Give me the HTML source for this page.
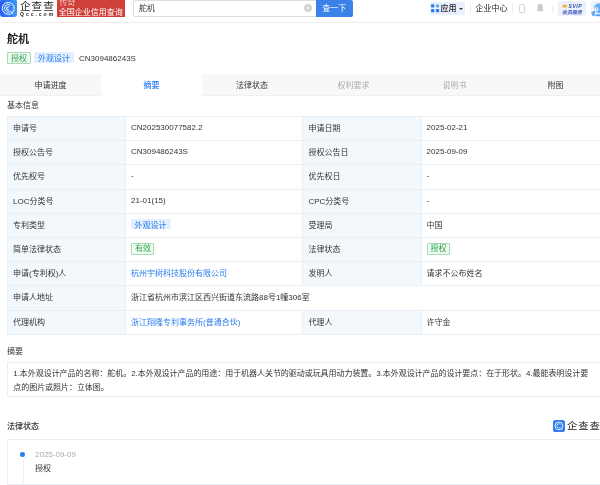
<!DOCTYPE html>
<html><head><meta charset="utf-8">
<style>
*{box-sizing:border-box;margin:0;padding:0}
html,body{width:600px;height:485px;overflow:hidden;background:#fff}
body{will-change:transform;font-family:"Liberation Sans","Noto Sans CJK SC",sans-serif;color:#333;position:relative;font-size:8px}
.abs{position:absolute;white-space:nowrap}
.hdr{position:absolute;left:0;top:0;width:600px;height:23px;background:#fff;border-bottom:1px solid #eee}
.logo{position:absolute;left:0;top:-0.7px;width:16.9px;height:17.4px;background:linear-gradient(90deg,#2a60f2,#3d98f5);border-radius:3px}
.red{position:absolute;left:57.2px;top:0;width:68px;height:16.9px;background:#d0403a;color:#fff;font-size:8px;line-height:8.5px;padding-left:1.6px;overflow:hidden}
.search{position:absolute;left:132.8px;top:-0.3px;width:184px;height:17px;border:1px solid #ddd;border-radius:2px 0 0 2px;background:#fff}
.btn{position:absolute;left:316px;top:0;width:36.5px;height:16.7px;background:#3a82e8;color:#fff;font-size:8px;line-height:17.5px;text-align:center;border-radius:0 2px 2px 0}
.tabs{position:absolute;left:0;top:74.4px;width:600px;height:21.2px;background:#f8f8f8;border-bottom:1px solid #f0f0f0}
.tab{position:absolute;top:74.4px;height:21.2px;line-height:23.2px;font-size:8px;text-align:center;width:101px;color:#333}
.tab.act{background:#fff;color:#2b7cf0;font-weight:500}
.tab.dis{color:#aaa}
.sec{position:absolute;left:7px;font-size:8px;color:#333}
table{position:absolute;left:7px;top:116px;width:620px;height:218px;table-layout:fixed;border-collapse:collapse;font-size:8px}
td{border:1px solid #e8eff6;height:24.2px;padding:0 0 2px 5px;vertical-align:middle;color:#333}
td.l{background:#f3f8fd}
td.v{padding-left:5px}
td.v:nth-child(4){padding-left:4.2px}
a{color:#2b7cf0;text-decoration:none}
.tag{display:inline-block;font-size:8px;line-height:10px;padding:0 3px;border-radius:1px}
.tg{color:#2aa54a;border:1px solid #a8dbb5;background:#f1faf3}
.tb{color:#2b7cf0;background:#e3effd;border:1px solid #e3effd}
td .tag{position:relative;top:0.8px;padding:0 2.2px 0 3px}
td .tb{border:0;line-height:7.3px;padding:3px 4px 0 4px;top:0.1px;left:-0.4px}
.box{position:absolute;left:7px;border:1px solid #e9eef4;background:#fff}
</style></head><body>
<div class="hdr">
 <div class="logo"></div>
 <svg class="abs" style="left:0;top:0" width="17" height="17" viewBox="0 0 17 17"><circle cx="8.25" cy="8.4" r="5.9" fill="none" stroke="#fff" stroke-width="0.95"/><path d="M10.43 11.51 A3.8 3.8 0 1 1 10.43 5.29" fill="none" stroke="#fff" stroke-width="0.9"/><path d="M8.85 9.70 A1.5 1.5 0 1 1 8.85 7.10" fill="none" stroke="#fff" stroke-width="1.1"/><path d="M11 11.6 L13.1 13.5" stroke="#fff" stroke-width="1" stroke-linecap="round"/></svg>
 <div class="abs" style="left:20px;top:0px;font-size:10.6px;font-weight:400;color:#222;letter-spacing:1px;line-height:13px">企查查</div>
 <div class="abs" style="left:20px;top:10.6px;font-size:5px;font-weight:bold;color:#222;letter-spacing:2px;line-height:6px">Qcc.com</div>
 <div class="red"><div style="margin-top:-1.4px;color:#f6c4c0;padding-left:0.8px">传奇</div><div style="margin-top:1.7px">全国企业信用查询</div></div>
 <div class="search"></div>
 <div class="abs" style="left:139px;top:4.3px;font-size:8px;line-height:10px;color:#333">舵机</div>
 <div class="abs" style="left:303.5px;top:4.2px;width:8px;height:8px;border-radius:50%;background:#d2d2d2;color:#fff;font-size:6px;line-height:8px;text-align:center">×</div>
 <div class="btn">查一下</div>
 <div class="abs" style="left:430px;top:2px;width:34.5px;height:12.5px;background:#e8f0fd;border-radius:2px"></div>
 <svg class="abs" style="left:431px;top:4px" width="9" height="9" viewBox="0 0 9 9"><rect x="0" y="0.2" width="3.3" height="3.3" rx="0.8" fill="#2b7cf0"/><rect x="4.9" y="0.2" width="3.3" height="3.3" rx="1.6" fill="#5b9bf5"/><rect x="0" y="5" width="3.3" height="3.3" rx="0.8" fill="#2b7cf0"/><rect x="4.9" y="5" width="3.3" height="3.3" rx="0.8" fill="#2b7cf0"/></svg>
 <div class="abs" style="left:440.5px;top:2.5px;font-size:8px;line-height:11px;color:#222;font-weight:500">应用</div>
 <div class="abs" style="left:459px;top:7.5px;width:0;height:0;border-left:2px solid transparent;border-right:2px solid transparent;border-top:2.2px solid #333"></div>
 <div class="abs" style="left:469.5px;top:3.5px;width:1px;height:9px;background:#ebebeb"></div>
 <div class="abs" style="left:475.5px;top:2.5px;font-size:8px;line-height:11px;color:#222">企业中心</div>
 <div class="abs" style="left:512px;top:3.5px;width:1px;height:9px;background:#ebebeb"></div>
 <div class="abs" style="left:519px;top:4px;width:6.2px;height:9.4px;border:1px solid #d4d4d4;border-radius:1.5px"></div>
 <svg class="abs" style="left:536px;top:3px" width="9" height="11" viewBox="0 0 9 11"><path d="M4.2 0.8 C2.4 0.8 1.6 2.3 1.6 4 L1.6 6.5 L0.7 8 L7.7 8 L6.8 6.5 L6.8 4 C6.8 2.3 6 0.8 4.2 0.8 Z" fill="#cbcbcb"/><path d="M3.2 8.8 Q4.2 10.2 5.2 8.8 Z" fill="#cbcbcb"/></svg>
 <div class="abs" style="left:552px;top:3.5px;width:1px;height:9px;background:#eee"></div>
 <div class="abs" style="left:557.7px;top:1.2px;width:28.5px;height:14.5px;background:#ebf0fc;border-radius:2px"></div>
 <svg class="abs" style="left:561.5px;top:4px" width="6" height="4" viewBox="0 0 6 4"><path d="M0.2 0.5 L1.6 1.6 L2.7 0.1 L3.8 1.6 L5.2 0.5 L4.7 3.5 L0.7 3.5 Z" fill="#f0b429"/></svg>
 <div class="abs" style="left:568.5px;top:3px;font-size:5px;font-weight:bold;font-style:italic;color:#2b4fae;line-height:6px;letter-spacing:0.6px">SVIP</div>
 <div class="abs" style="left:562px;top:9.2px;font-size:5px;font-weight:bold;font-style:italic;color:#3a57b0;line-height:6px">会员服务</div>
 <div class="abs" style="left:590.9px;top:1px;width:16px;height:15.3px;border-radius:2.5px;background:#edf3fe"></div>
 <svg class="abs" style="left:590px;top:0" width="10" height="17" viewBox="0 0 10 17"><circle cx="8.9" cy="8.2" r="4.8" fill="#66aaf9"/><path d="M1.2 12.2 L5.2 10.2 L5 15.4 L2.2 16 Z" fill="#66aaf9"/><path d="M5.5 14.5 L10 13.2 L10 16.2 L5.2 16.2 Z" fill="#5aa2f8"/><rect x="5" y="13.2" width="5" height="1" fill="#edf3fe"/><circle cx="6.4" cy="9.2" r="2" fill="#fff"/><circle cx="6.7" cy="9" r="0.85" fill="#4f98f5"/></svg>
</div>

<div class="abs" style="left:7px;top:33px;font-size:11px;font-weight:bold;color:#222;line-height:13px">舵机</div>
<div class="abs" style="left:7px;top:52.4px"><span class="tag tg" style="padding-top:1px;line-height:9px">授权</span></div>
<div class="abs" style="left:34.2px;top:52px"><span class="tag tb" style="padding:0 3.8px;border:0;line-height:8.3px;padding-top:3px">外观设计</span></div>
<div class="abs" style="left:79px;top:53px;font-size:8px;line-height:11px;color:#333">CN309486243S</div>

<div class="tabs"></div>
<div class="tab" style="left:0">申请进度</div>
<div class="tab act" style="left:101px">摘要</div>
<div class="tab" style="left:202px;width:100px">法律状态</div>
<div class="tab dis" style="left:303px">权利要求</div>
<div class="tab dis" style="left:404px">说明书</div>
<div class="tab" style="left:505px;width:101px">附图</div>

<div class="sec" style="top:100px;line-height:11px">基本信息</div>
<table><colgroup><col style="width:118px"><col style="width:177.4px"><col style="width:119px"><col style="width:205.5px"></colgroup>
<tr><td class="l">申请号</td><td class="v">CN202530077582.2</td><td class="l">申请日期</td><td class="v">2025-02-21</td></tr>
<tr><td class="l">授权公告号</td><td class="v">CN309486243S</td><td class="l">授权公告日</td><td class="v">2025-09-09</td></tr>
<tr><td class="l">优先权号</td><td class="v">-</td><td class="l">优先权日</td><td class="v">-</td></tr>
<tr><td class="l">LOC分类号</td><td class="v">21-01(15)</td><td class="l">CPC分类号</td><td class="v">-</td></tr>
<tr><td class="l">专利类型</td><td class="v"><span class="tag tb">外观设计</span></td><td class="l">受理局</td><td class="v">中国</td></tr>
<tr><td class="l">简单法律状态</td><td class="v"><span class="tag tg">有效</span></td><td class="l">法律状态</td><td class="v"><span class="tag tg">授权</span></td></tr>
<tr><td class="l">申请(专利权)人</td><td class="v"><a>杭州宇树科技股份有限公司</a></td><td class="l">发明人</td><td class="v">请求不公布姓名</td></tr>
<tr><td class="l">申请人地址</td><td class="v" colspan="3">浙江省杭州市滨江区西兴街道东流路88号1幢306室</td></tr>
<tr><td class="l">代理机构</td><td class="v"><a>浙江翔隆专利事务所(普通合伙)</a></td><td class="l">代理人</td><td class="v">许守金</td></tr>
</table>

<div class="sec" style="top:346px;line-height:11px">摘要</div>
<div class="box" style="top:361.7px;width:600px;height:35.8px"></div>
<div class="abs" style="left:13.3px;top:367px;font-size:8px;line-height:14px;color:#333;white-space:normal;width:580px;letter-spacing:-0.05px">1.本外观设计产品的名称：舵机。2.本外观设计产品的用途：用于机器人关节的驱动或玩具用动力装置。3.本外观设计产品的设计要点：在于形状。4.最能表明设计要点的图片或照片：立体图。</div>

<div class="sec" style="top:420.7px;line-height:11px;font-weight:500">法律状态</div>
<div class="box" style="top:439px;width:600px;height:46px"></div>
<div class="abs" style="left:22.6px;top:460px;width:1px;height:25px;background:#f0f0f0"></div>
<div class="abs" style="left:20.2px;top:452.4px;width:4.6px;height:4.6px;border-radius:50%;background:#2b7cf0"></div>
<div class="abs" style="left:35px;top:449px;font-size:8px;line-height:11px;color:#aaa">2025-09-09</div>
<div class="abs" style="left:35px;top:463px;font-size:8px;line-height:11px;color:#333">授权</div>

<div class="abs" style="left:553px;top:419.8px;width:12px;height:12px;border-radius:2.6px;background:#2f7cf0"></div>
<svg class="abs" style="left:553px;top:419.8px" width="12" height="12" viewBox="0 0 12 12"><circle cx="5.9" cy="5.9" r="3.9" fill="none" stroke="#fff" stroke-width="0.9"/><path d="M7.6 7.2 A2.1 2.1 0 1 1 7.6 4.6" fill="none" stroke="#fff" stroke-width="0.7"/><path d="M8.3 8.5 L9.6 9.7" stroke="#fff" stroke-width="0.9"/></svg>
<div class="abs" style="left:566.8px;top:419.3px;font-size:9.6px;font-weight:400;color:#222;line-height:13px;letter-spacing:0.8px;transform:scaleX(1.08);transform-origin:0 0">企查查</div>
</body></html>
